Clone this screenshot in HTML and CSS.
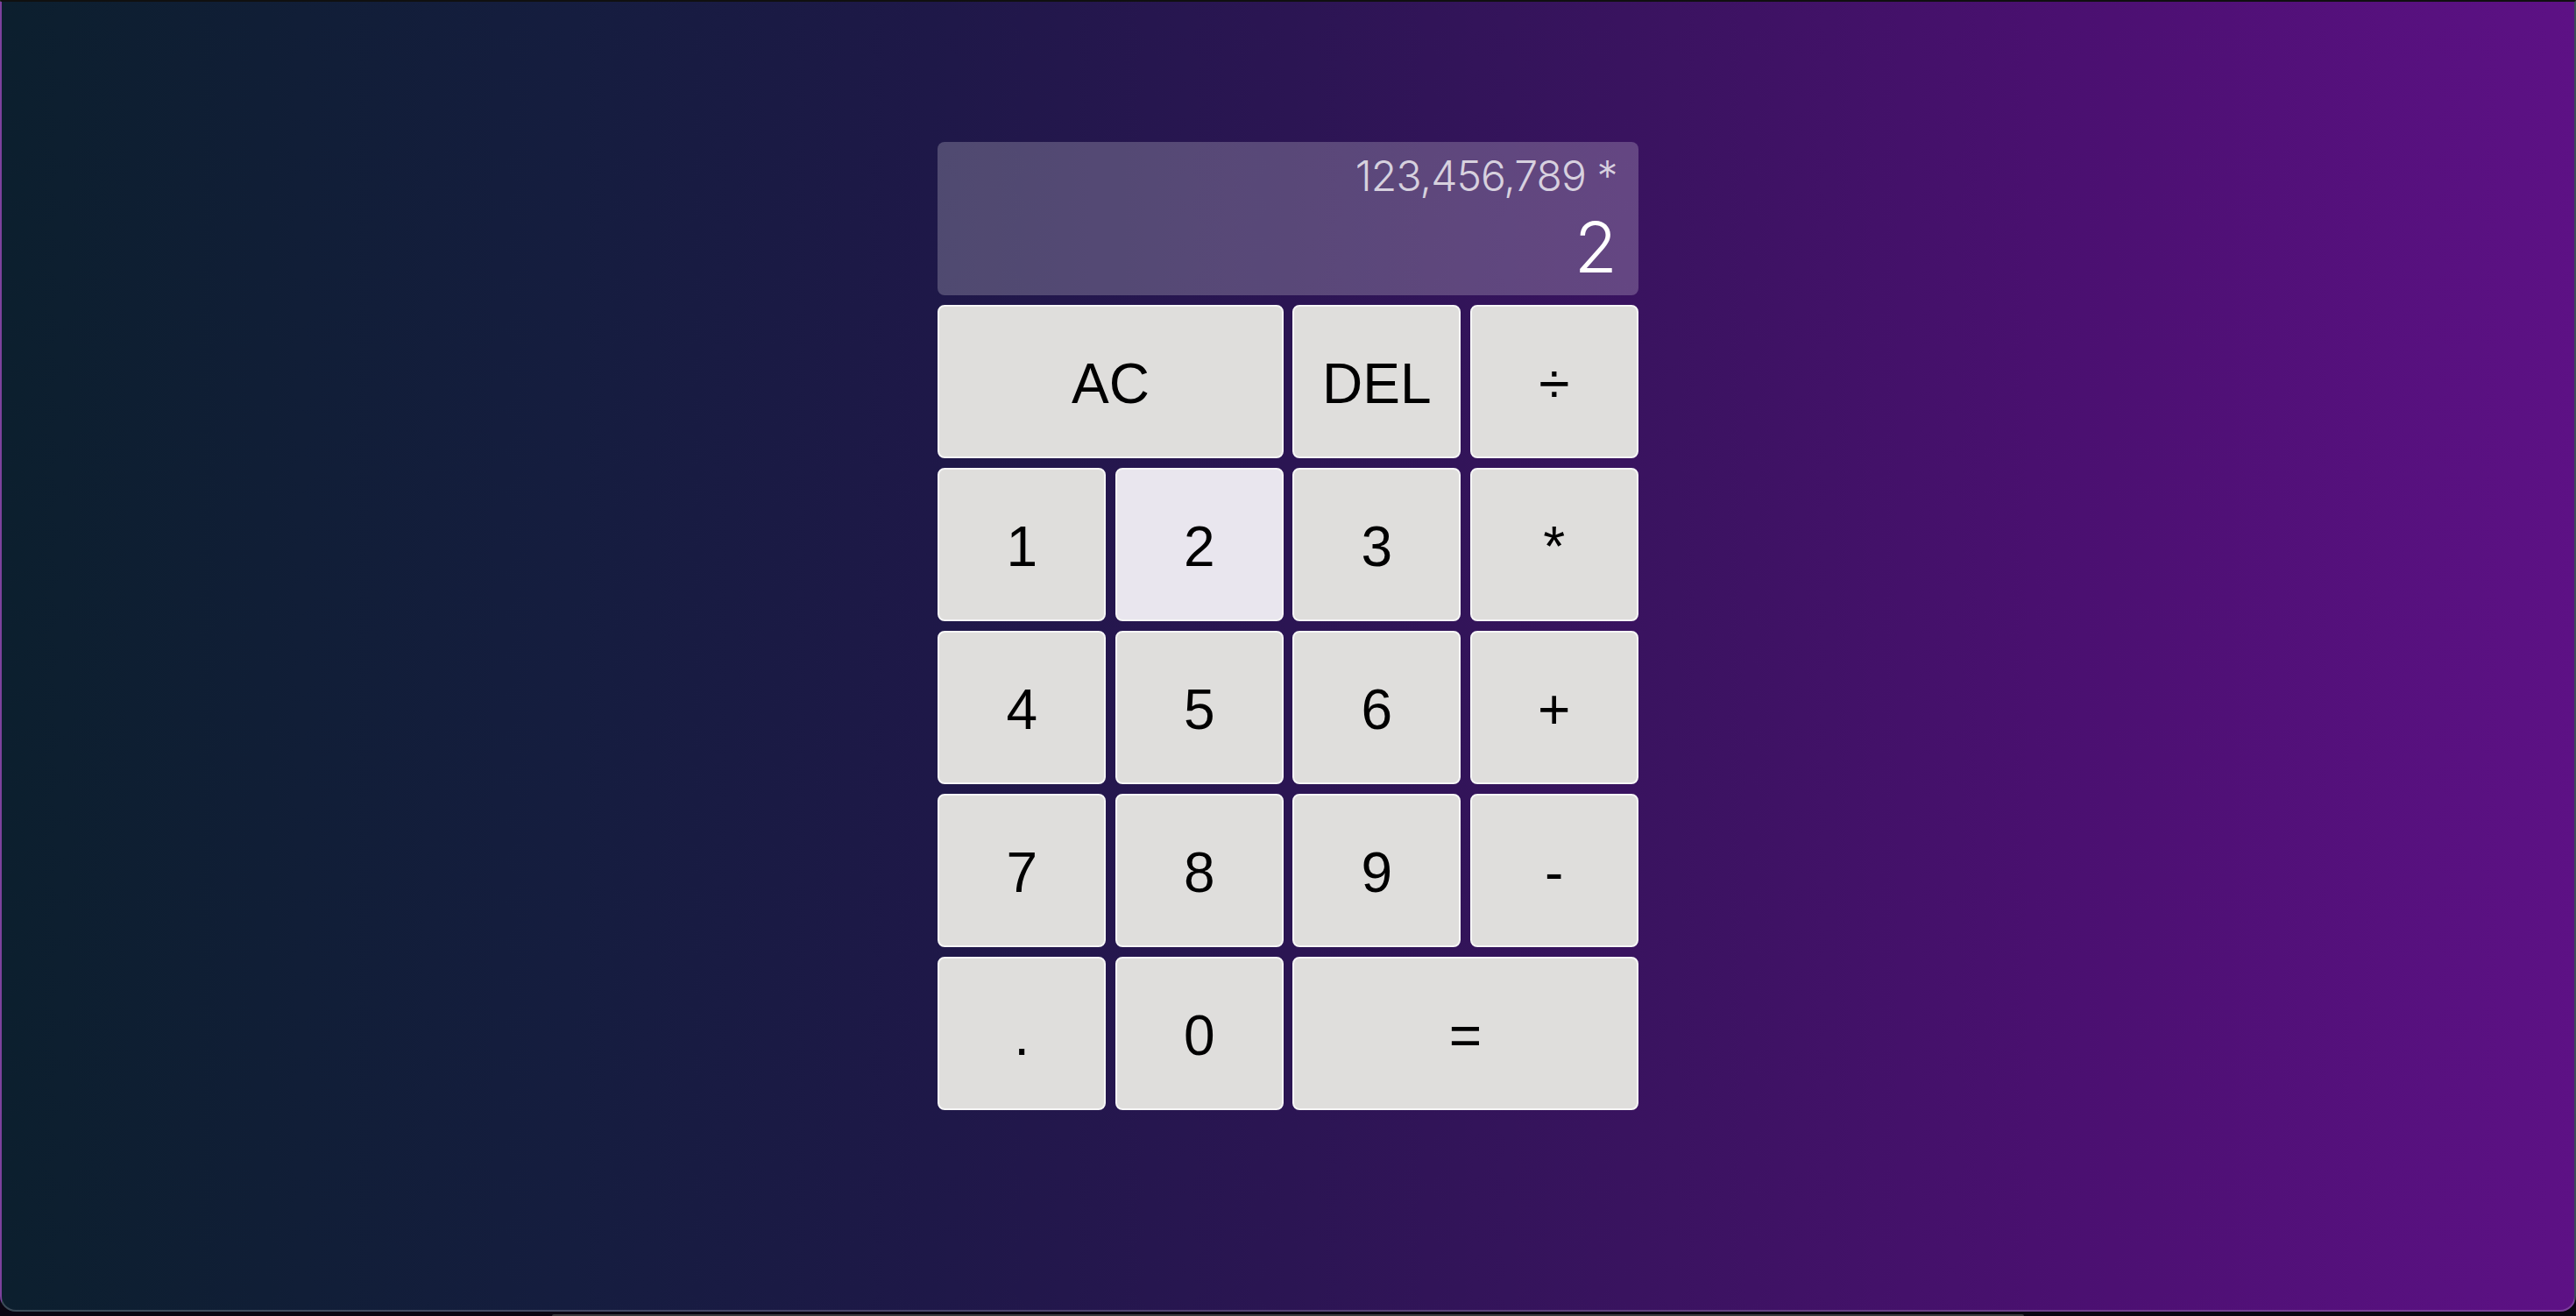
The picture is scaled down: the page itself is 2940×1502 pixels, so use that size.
FILE: index.html
```html
<!DOCTYPE html>
<html lang="en">
<head>
<meta charset="utf-8">
<title>Calculator</title>
<link rel="stylesheet" href="styles.css">
</head>
<body>
  <div class="window">
    <main class="calculator-grid">
      <div class="output">
        <div class="previous-operand">123,456,789 *</div>
        <div class="current-operand">2</div>
      </div>
      <button class="key span-two">AC</button>
      <button class="key">DEL</button>
      <button class="key">÷</button>
      <button class="key">1</button>
      <button class="key key-active">2</button>
      <button class="key">3</button>
      <button class="key">*</button>
      <button class="key">4</button>
      <button class="key">5</button>
      <button class="key">6</button>
      <button class="key">+</button>
      <button class="key">7</button>
      <button class="key">8</button>
      <button class="key">9</button>
      <button class="key">-</button>
      <button class="key">.</button>
      <button class="key">0</button>
      <button class="key span-two">=</button>
    </main>
  </div>
  <div class="dock-strip"><div class="dock-bar"></div></div>
</body>
</html>
```

FILE: styles.css
```css
* {
  box-sizing: border-box;
}

html, body {
  margin: 0;
  padding: 0;
}

body {
  width: 2940px;
  height: 1502px;
  overflow: hidden;
  background: #0a0612;
  font-family: "Liberation Sans", Arial, sans-serif;
}

.window {
  height: 1497px;
  border: 2px solid rgba(255, 255, 255, 0.2);
  border-top: 2px solid #101010;
  border-radius: 0 0 18px 18px;
  background: linear-gradient(to right,
    #0c1f2e 0%,
    #151d3f 22%,
    #1e1848 36%,
    #2b1553 50%,
    #3a1360 64%,
    #4a1070 80%,
    #5d1185 100%);
  padding-top: 160px;
}

.calculator-grid {
  display: grid;
  justify-content: center;
  grid-template-columns: repeat(4, 192px);
  grid-template-rows: 175px repeat(5, 175px);
  column-gap: 10.5px;
  row-gap: 11px;
}

.output {
  grid-column: 1 / -1;
  background: rgba(255, 255, 255, 0.22);
  border-radius: 8px;
  display: flex;
  flex-direction: column;
  align-items: flex-end;
  padding: 15px 24px 15px;
  gap: 17px;
  font-family: Inter, "Noto Sans", sans-serif;
  font-weight: 300;
}

.previous-operand {
  font-size: 48px;
  line-height: 48px;
  letter-spacing: -0.9px;
  color: rgba(255, 255, 255, 0.75);
}

.current-operand {
  font-size: 80px;
  line-height: 80px;
  color: #ffffff;
}

.key {
  font-family: "Liberation Sans", Arial, sans-serif;
  font-size: 64px;
  color: #000;
  background: #dfdedc;
  border: 2px solid #f6f6f6;
  border-radius: 8px;
  padding: 5px 0 0;
  margin: 0;
  cursor: pointer;
  outline: none;
}

.key-active {
  background: #e9e6ee;
}

.span-two {
  grid-column: span 2;
}

.dock-strip {
  height: 5px;
  display: flex;
  justify-content: center;
  align-items: flex-end;
}

.dock-bar {
  width: 1680px;
  height: 2px;
  background: #3a3a3f;
  border-radius: 2px 2px 0 0;
}
```
